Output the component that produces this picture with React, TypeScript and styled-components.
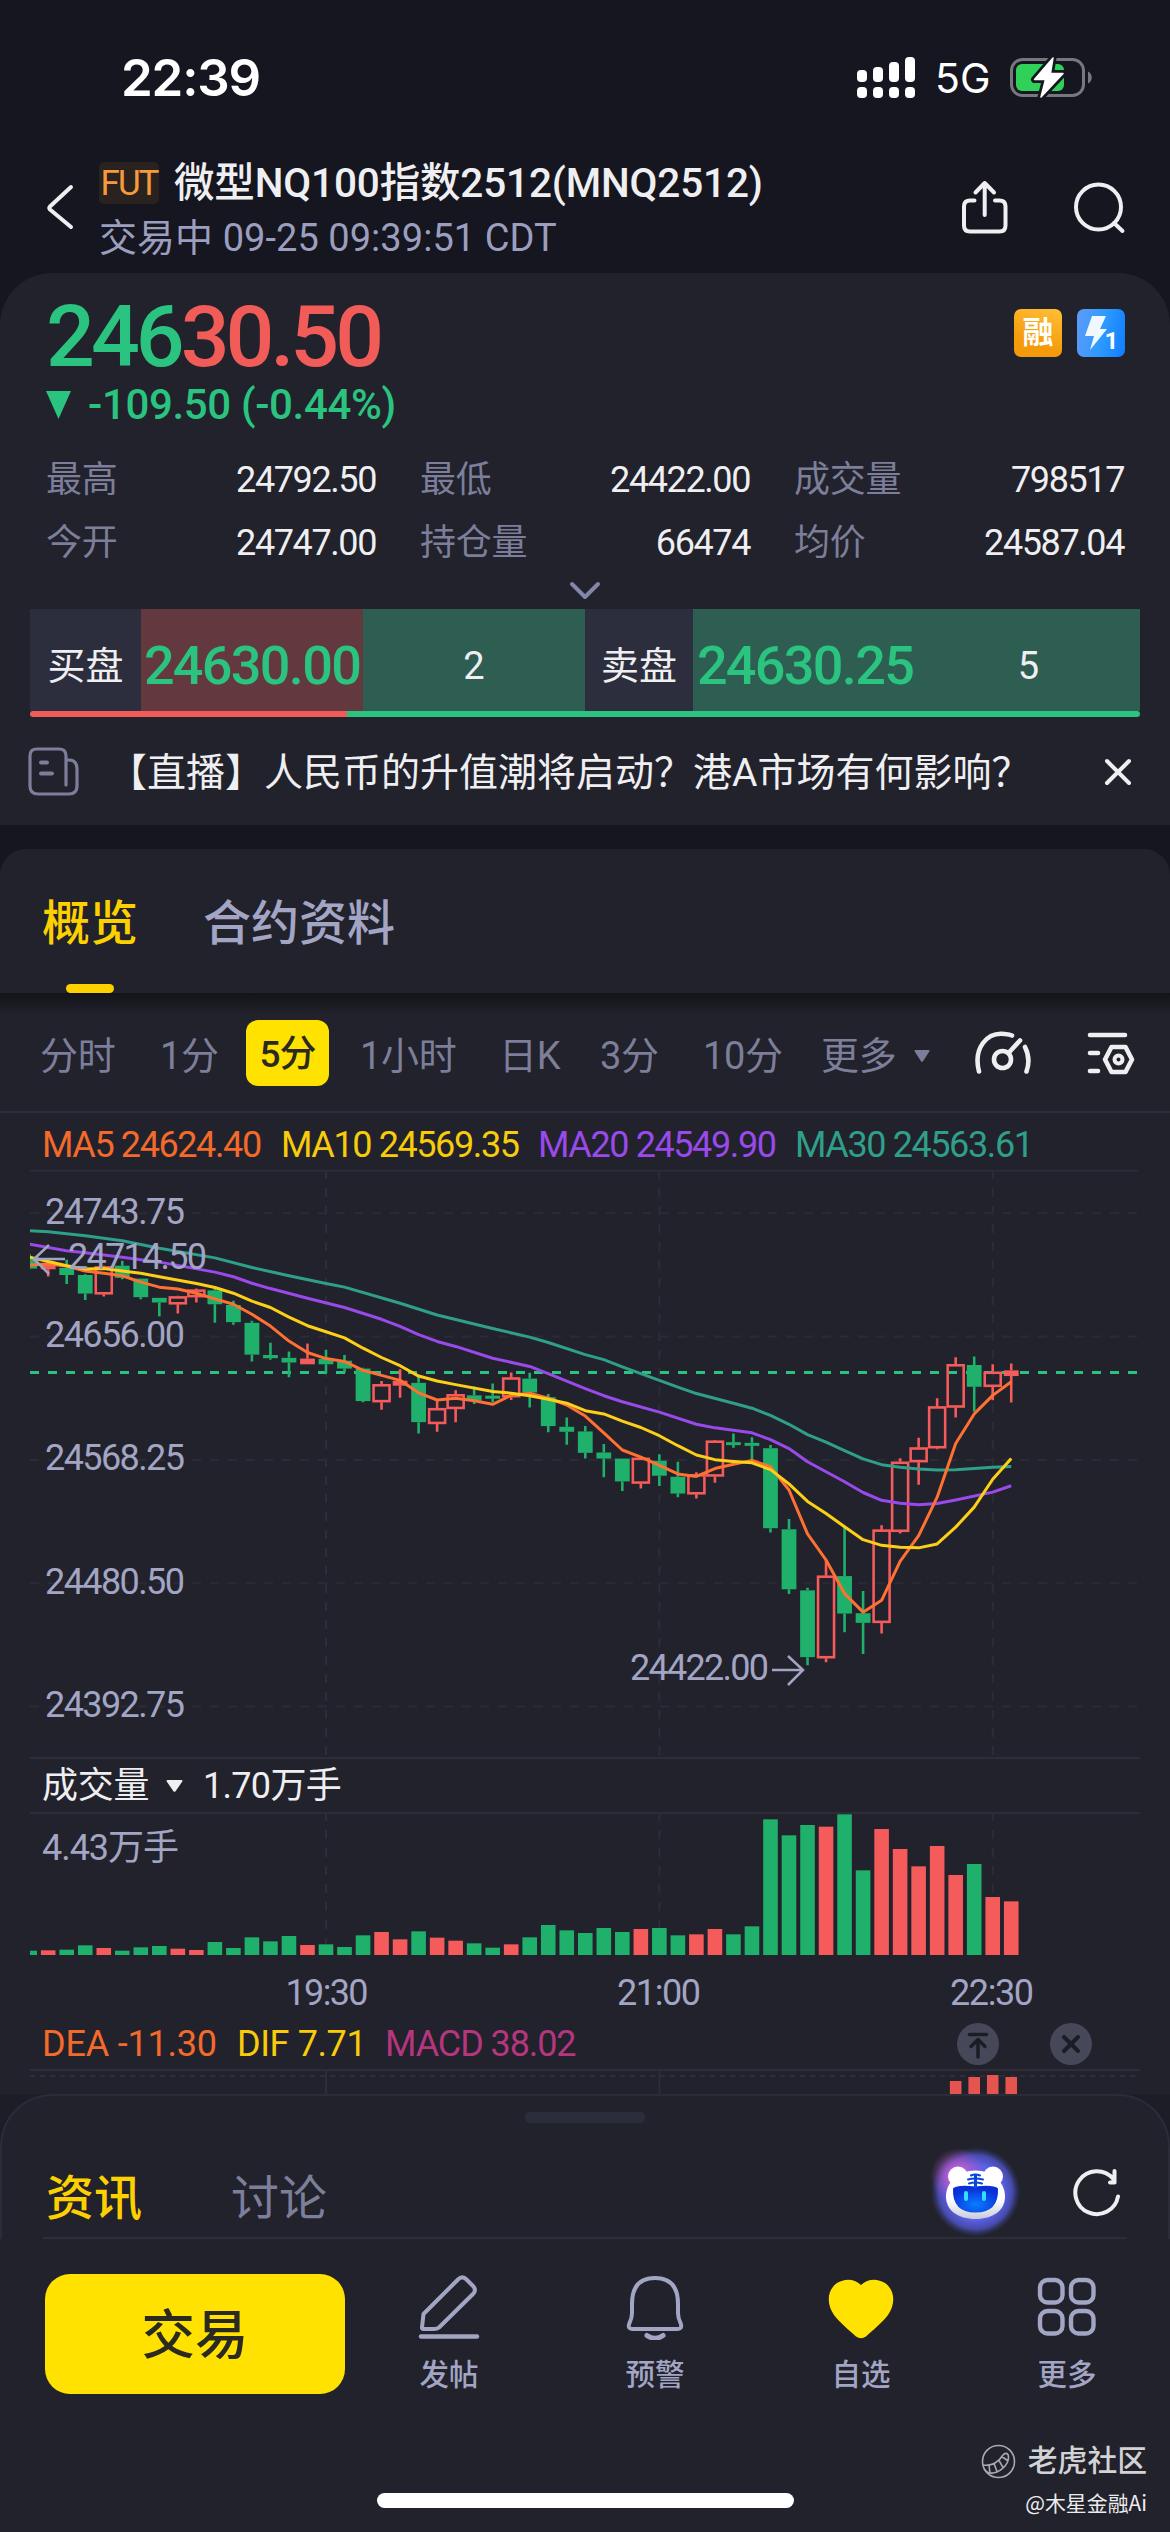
import React from "react";
import styled, { createGlobalStyle } from "styled-components";

const color = {
  page: "#15161f",
  card: "#21222b",
  line: "#2c2d39",
  white: "#efeff2",
  muted: "#7c7e9a",
  soft: "#a3a5c4",
  green: "#2bc380",
  red: "#f25c58",
  candleGreen: "#1fb06c",
  candleRed: "#f45b5a",
  yellow: "#ffe200",
  gold: "#fdd000",
};

const Global = createGlobalStyle`
  * { box-sizing: border-box; }
  body { margin: 0; background: ${color.page}; }
  svg { display: block; }
`;

const Screen = styled.div`
  width: 1170px;
  height: 2532px;
  overflow: hidden;
  display: flex;
  flex-direction: column;
  background: ${color.page};
  color: ${color.white};
  font-family: Roboto, "Noto Sans CJK SC", sans-serif;
  white-space: nowrap;
`;

/* ---------- text ---------- */

const Text = styled.span<{ $size: number; $color?: string; $weight?: number; $spacing?: number }>`
  font-size: ${(p) => p.$size}px;
  line-height: 1;
  color: ${(p) => p.$color ?? color.white};
  font-weight: ${(p) => p.$weight ?? 400};
  letter-spacing: ${(p) => p.$spacing ?? 0}px;
`;

/* ---------- status bar ---------- */

const StatusBar = styled.div`
  height: 150px;
  flex: none;
  display: flex;
  align-items: center;
  padding: 5px 77px 0 121px;
  font-family: Inter, sans-serif;
`;
const Clock = styled.div`
  flex: 1;
  font-size: 51px;
  font-weight: 600;
  line-height: 1;
  color: #fff;
  letter-spacing: -1.2px;
`;
const Network = styled.div`
  font-size: 41px;
  font-weight: 400;
  line-height: 1;
  color: #fff;
  width: 75px;
  padding: 2px 0 0 0;
`;
const SignalBox = styled.div`
  width: 78px;
`;

/* ---------- header ---------- */

const Header = styled.div`
  height: 123px;
  flex: none;
  display: flex;
  align-items: flex-start;
  padding: 10px 44px 0 46px;
`;
const BackBox = styled.div`
  width: 53px;
  padding-top: 24px;
`;
const Titles = styled.div`
  flex: 1;
  display: flex;
  flex-direction: column;
`;
const TitleRow = styled.div`
  display: flex;
  align-items: center;
  height: 46px;
  gap: 15px;
`;
const SubtitleRow = styled.div`
  display: flex;
  align-items: center;
  height: 64px;
`;
const FutTag = styled.div`
  width: 60px;
  height: 42px;
  border-radius: 5px;
  background: #2a221e;
  color: #f79a3c;
  font-size: 35px;
  line-height: 44px;
  text-align: center;
  letter-spacing: -2px;
`;
const HeaderIcons = styled.div`
  display: flex;
  gap: 65px;
  padding-top: 20px;
`;

/* ---------- quote card ---------- */

const QuoteCard = styled.div`
  height: 552px;
  flex: none;
  background: ${color.card};
  border-radius: 52px 52px 0 0;
  display: flex;
  flex-direction: column;
`;
const PriceRow = styled.div`
  display: flex;
  justify-content: space-between;
  align-items: flex-start;
  height: 102px;
  padding: 24px 45px 0 46px;
`;
const Price = styled.div`
  font-size: 86px;
  line-height: 80px;
  font-weight: 500;
  letter-spacing: -4px;
  color: ${color.red};
`;
const PriceHead = styled.span`
  color: ${color.green};
`;
const Badges = styled.div`
  display: flex;
  gap: 15px;
  padding-top: 12px;
`;
const Badge = styled.div<{ $bg: string }>`
  width: 48px;
  height: 48px;
  border-radius: 7px;
  background: ${(p) => p.$bg};
  display: flex;
  align-items: center;
  justify-content: center;
  font-size: 31px;
  font-weight: 700;
  line-height: 48px;
  color: #fff;
`;
const BoostDigit = styled.span`
  font-size: 24px;
  line-height: 24px;
  padding-top: 16px;
  margin-left: -3px;
  font-weight: 700;
`;
const ChangeRow = styled.div`
  display: flex;
  align-items: center;
  gap: 17px;
  height: 58px;
  padding: 2px 0 0 46px;
`;
const Stats = styled.div`
  display: grid;
  grid-template-columns: 330px 330px 330px;
  grid-auto-rows: 63px;
  column-gap: 44px;
  padding: 15px 0 0 46px;
`;
const Stat = styled.div`
  display: flex;
  align-items: center;
  justify-content: space-between;
`;
const ExpandRow = styled.div`
  height: 35px;
  display: flex;
  justify-content: center;
  padding-top: 7px;
`;
const Book = styled.div`
  height: 102px;
  flex: none;
  margin: 0 30px;
  display: grid;
  grid-template-columns: 111px 222px 222px 108px 224px 223px;
`;
const BookCell = styled.div<{ $bg: string }>`
  background: ${(p) => p.$bg};
  display: flex;
  align-items: center;
  justify-content: center;
  padding-top: 11px;
`;
const Ratio = styled.div`
  height: 6px;
  flex: none;
  margin: 0 30px;
  display: flex;
  border-radius: 3px;
  overflow: hidden;
`;
const RatioPart = styled.div<{ $grow: number; $bg: string }>`
  flex: ${(p) => p.$grow};
  background: ${(p) => p.$bg};
`;
const News = styled.div`
  flex: 1;
  display: flex;
  align-items: center;
  padding: 1px 38px 0 27px;
`;
const NewsText = styled.div`
  flex: 1;
  padding: 3px 0 0 28px;
  font-size: 39px;
  line-height: 40px;
  color: ${color.white};
`;

/* ---------- tabs ---------- */

const TabCard = styled.div`
  height: 144px;
  flex: none;
  margin-top: 24px;
  background: ${color.card};
  border-radius: 26px 26px 0 0;
  display: flex;
  gap: 65px;
  padding-left: 42px;
`;
const Tab = styled.div<{ $active?: boolean }>`
  display: flex;
  flex-direction: column;
  justify-content: space-between;
  align-items: center;
  padding-top: 51px;
  font-size: 48px;
  line-height: 48px;
  font-weight: 500;
  color: ${(p) => (p.$active ? color.gold : color.soft)};
`;
const TabLine = styled.div`
  width: 48px;
  height: 9px;
  border-radius: 5px;
  background: ${color.gold};
`;

/* ---------- chart ---------- */

const ChartCard = styled.div`
  height: 1101px;
  flex: none;
  background: linear-gradient(#131419 0, ${color.card} 22px);
  display: flex;
  flex-direction: column;
`;
const Periods = styled.div`
  height: 120px;
  flex: none;
  border-bottom: 2px solid ${color.line};
  display: grid;
  grid-template-columns: 120px 86px 114px 139px 101px 103px 118px 153px 112px 52px;
  align-items: center;
  padding: 2px 0 0 40px;
`;
const Period = styled.div`
  display: flex;
  align-items: center;
  gap: 18px;
  padding-top: 6px;
  font-size: 38px;
  line-height: 38px;
  font-weight: 400;
  letter-spacing: -0.3px;
  color: ${color.muted};
`;
const PeriodPill = styled.div`
  width: 83px;
  height: 66px;
  border-radius: 12px;
  background: ${color.yellow};
  color: #2b2a20;
  font-size: 37px;
  line-height: 69px;
  font-weight: 500;
  text-align: center;
  letter-spacing: -1px;
`;
const Averages = styled.div`
  height: 57px;
  flex: none;
  display: grid;
  grid-template-columns: 239px 257px 257px 260px;
  align-items: center;
  padding: 6px 0 0 42px;
`;
const Plot = styled.svg`
  flex: none;
`;

const VolumeHead = styled.div`
  height: 53px;
  flex: none;
  display: grid;
  grid-template-columns: 124px 37px auto;
  align-items: center;
  padding-left: 42px;
`;
const MacdHead = styled.div`
  height: 54px;
  flex: none;
  display: grid;
  grid-template-columns: 195px 148px 572px 93px 50px;
  align-items: center;
  padding: 3px 0 0 42px;
`;

/* ---------- bottom sheet ---------- */

const Sheet = styled.div`
  height: 145px;
  flex: none;
  background: ${color.card};
  border: 2px solid #2b2c38;
  border-bottom: 0;
  border-radius: 52px 52px 0 0;
  display: flex;
  flex-direction: column;
`;
const SheetWrap = styled.div`
  background: #1c1d26;
  flex: none;
`;
const Handle = styled.div`
  width: 120px;
  height: 12px;
  border-radius: 5px;
  background: #2c2d3b;
  margin: 16px auto 0;
`;
const SheetTabs = styled.div`
  flex: 1;
  margin: 0 41px;
  padding-left: 3px;
  border-bottom: 2px solid ${color.line};
  display: flex;
  align-items: flex-start;
`;
const SheetTab = styled.div<{ $active?: boolean }>`
  width: 185px;
  padding-top: 52px;
  font-size: 48px;
  line-height: 48px;
  font-weight: ${(p) => (p.$active ? 500 : 400)};
  color: ${(p) => (p.$active ? color.gold : color.muted)};
`;
const Spacer = styled.div`
  flex: 1;
`;
const BotBox = styled.div`
  width: 96px;
  height: 90px;
  margin: 24px 50px 0 0;
`;
const RefreshBox = styled.div`
  padding: 45px 6px 0 0;
`;
const ActionBar = styled.div`
  height: 187px;
  flex: none;
  background: ${color.card};
  display: flex;
  align-items: flex-start;
  padding: 35px 0 0 45px;
`;
const TradeButton = styled.div`
  width: 300px;
  height: 120px;
  margin-right: 1px;
  border-radius: 25px;
  background: ${color.yellow};
  color: #2b2a20;
  font-size: 53.5px;
  line-height: 123px;
  font-weight: 500;
  text-align: center;
`;
const Action = styled.div`
  width: 206px;
  display: flex;
  flex-direction: column;
  align-items: center;
  gap: 14px;
  font-size: 29.5px;
  line-height: 42px;
  font-weight: 500;
  color: ${color.soft};
`;
const Footer = styled.div`
  flex: 1;
  background: ${color.card};
  display: grid;
  grid-template-columns: 377px 417px 1fr;
`;
const HomeBar = styled.div`
  grid-column: 2;
  height: 15px;
  border-radius: 8px;
  background: #fff;
  align-self: end;
  margin-bottom: 24px;
`;
const Watermark = styled.div`
  display: flex;
  flex-direction: column;
  align-items: flex-end;
  padding: 17px 23px 0 0;
`;
const Brand = styled.div`
  display: flex;
  align-items: center;
  gap: 12px;
  height: 36px;
  font-size: 29.8px;
  line-height: 32px;
  font-weight: 500;
  color: #d3d3d6;
`;
const Author = styled.div`
  font-family: "Noto Sans CJK SC", sans-serif;
  font-size: 20.9px;
  line-height: 46px;
  color: #ececee;
`;

/* ---------- chart data ---------- */

const STEP = 18.52;
const X0 = 326;
const xAt = (k: number) => X0 + k * STEP;
/* Prices are stored in grid units; 2.8 units make one pixel. */
const yAt = (v: number) => 20 + v / 2.8;

type Candle = [string, number, number, number, number];
const FIRST = -16;
const candles: Candle[] = [
  ["g", 180, 190, 220, 222], ["r", 200, 205, 222, 242], ["g", 195, 218, 238, 263], ["g", 236, 238, 290, 308],
  ["r", 212, 214, 292, 298], ["g", 198, 212, 246, 250], ["g", 248, 248, 300, 306], ["g", 302, 302, 315, 354],
  ["r", 296, 298, 320, 346], ["r", 276, 279, 300, 315], ["g", 270, 281, 320, 372], ["g", 310, 322, 370, 377],
  ["g", 366, 372, 461, 480], ["g", 428, 462, 471, 475], ["g", 452, 470, 483, 524], ["r", 430, 472, 488, 488],
  ["g", 447, 473, 488, 513], ["g", 462, 478, 500, 512], ["g", 498, 500, 591, 594], ["r", 535, 544, 594, 615],
  ["r", 502, 534, 548, 582], ["g", 520, 540, 650, 682], ["r", 588, 611, 655, 677], ["r", 561, 572, 613, 650],
  ["g", 550, 575, 590, 599], ["g", 542, 576, 583, 594], ["r", 511, 525, 580, 588], ["g", 512, 528, 567, 609],
  ["g", 571, 580, 661, 678], ["g", 637, 663, 677, 713], ["g", 661, 676, 736, 752], ["g", 711, 735, 752, 804],
  ["g", 752, 752, 816, 843], ["r", 745, 750, 822, 836], ["g", 740, 758, 800, 829], ["g", 761, 803, 850, 860],
  ["r", 790, 796, 852, 864], ["r", 700, 702, 802, 820], ["g", 682, 706, 712, 722], ["g", 692, 708, 716, 760],
  ["g", 714, 723, 947, 959], ["g", 921, 950, 1118, 1131], ["g", 1114, 1121, 1308, 1331], ["r", 1036, 1080, 1311, 1322],
  ["g", 940, 1081, 1186, 1238], ["g", 1123, 1185, 1212, 1299], ["r", 939, 951, 1212, 1242], ["r", 751, 761, 957, 962],
  ["r", 694, 721, 762, 825], ["r", 583, 606, 723, 726], ["r", 468, 488, 609, 637], ["g", 466, 490, 551, 620],
  ["r", 488, 509, 551, 589], ["r", 486, 505, 521, 595],
];

type Knot = [number, number];
const averages: { stroke: string; knots: Knot[] }[] = [
  {
    stroke: "#2f9f8a",
    knots: [[-16, 114], [-15, 117], [-13, 128], [-11, 142], [-9, 163], [-6, 190], [-4, 217], [-2, 240], [0, 262], [1, 272], [4, 317], [6, 350], [9, 388], [11, 412], [12, 427], [14, 461], [15, 475], [16, 495], [18, 533], [19, 552], [20, 570], [22, 597], [23, 611], [24, 631], [25, 656], [26, 685], [27, 706], [28, 730], [29, 753], [30, 769], [31, 776], [32, 781], [33, 784], [34, 783], [35, 780], [36, 776], [37, 774]],
  },
  {
    stroke: "#9a49ea",
    knots: [[-16, 152], [-15, 161], [-14, 170], [-13, 176], [-11, 188], [-9, 202], [-8, 211], [-6, 230], [-5, 243], [-4, 261], [-3, 276], [-1, 303], [1, 329], [3, 362], [4, 382], [5, 405], [6, 424], [7, 438], [9, 471], [11, 494], [12, 514], [14, 556], [15, 576], [16, 593], [18, 622], [20, 656], [21, 666], [23, 680], [24, 699], [25, 724], [26, 761], [27, 789], [28, 817], [29, 847], [30, 869], [31, 877], [32, 881], [33, 878], [34, 868], [36, 846], [37, 828]],
  },
  {
    stroke: "#ff7033",
    knots: [[-16, 210], [-15, 207], [-14, 213], [-13, 227], [-12, 233], [-11, 240], [-10, 258], [-9, 272], [-8, 277], [-7, 289], [-6, 305], [-5, 320], [-4, 348], [-3, 381], [-2, 423], [-1, 455], [0, 472], [1, 480], [2, 505], [3, 519], [4, 533], [5, 568], [6, 588], [7, 583], [8, 590], [9, 600], [10, 575], [11, 569], [12, 583], [13, 602], [14, 633], [15, 680], [16, 728], [17, 748], [18, 771], [19, 795], [20, 802], [21, 780], [22, 768], [23, 757], [24, 775], [25, 840], [26, 963], [27, 1036], [28, 1130], [29, 1182], [30, 1149], [31, 1040], [32, 968], [33, 860], [34, 710], [35, 627], [36, 575], [37, 537]],
  },
  {
    stroke: "#fdd017",
    knots: [[-16, 188], [-15, 200], [-14, 212], [-13, 221], [-12, 220], [-11, 227], [-10, 233], [-9, 243], [-7, 262], [-6, 273], [-5, 289], [-4, 311], [-3, 329], [-2, 356], [-1, 380], [0, 397], [1, 414], [2, 443], [3, 469], [4, 492], [5, 521], [6, 535], [7, 545], [9, 564], [10, 569], [11, 576], [12, 586], [13, 597], [14, 618], [15, 627], [16, 647], [17, 665], [18, 688], [19, 716], [20, 742], [21, 755], [22, 760], [23, 764], [24, 783], [25, 823], [26, 872], [27, 906], [28, 943], [29, 979], [30, 995], [31, 1000], [32, 1002], [33, 991], [34, 944], [35, 888], [36, 810], [37, 752]],
  },
];

/* Height of each volume bar, in thirds of a pixel. */
const volumes: [string, number][] = [
  ["g", 13], ["r", 14], ["g", 16], ["g", 29], ["r", 21], ["g", 13], ["g", 23], ["g", 27], ["r", 19], ["r", 15],
  ["g", 39], ["g", 21], ["g", 53], ["g", 41], ["g", 57], ["r", 30], ["g", 32], ["g", 24], ["g", 59], ["r", 69],
  ["r", 47], ["g", 71], ["r", 52], ["r", 43], ["g", 35], ["g", 22], ["r", 32], ["g", 53], ["g", 90], ["g", 74],
  ["g", 66], ["g", 81], ["g", 69], ["r", 78], ["g", 81], ["g", 59], ["r", 62], ["r", 78], ["g", 62], ["g", 86],
  ["g", 407], ["g", 359], ["g", 390], ["r", 385], ["g", 422], ["g", 254], ["r", 378], ["r", 318], ["r", 266],
  ["r", 327], ["r", 240], ["g", 273], ["r", 174], ["r", 161],
];

const macdBars = [13, 17, 19, 17];

const gridX = [326, 659.4, 992.7];
const priceLabels = ["24743.75", "24656.00", "24568.25", "24480.50", "24392.75"];
const tone = (c: string) => (c === "g" ? color.candleGreen : color.candleRed);

const Label = ({ x, y, width, anchor, children }: { x: number; y: number; width: number; anchor?: "middle"; children: string }) => (
  <text x={x} y={y} fontFamily="Roboto, 'Noto Sans CJK SC', sans-serif" fontSize={36} fill={color.soft} textLength={width} textAnchor={anchor}>
    {children}
  </text>
);

const PriceChart = () => (
  <Plot width={1170} height={589} viewBox="0 0 1170 589">
    <path d="M30 0.500H1138M30 588H1140" stroke={color.line} strokeWidth={2} />
    {gridX.map((x) => (
      <path key={x} d={`M${x} 0V588`} stroke="#2c2d38" strokeWidth={2} strokeDasharray="9 9" />
    ))}
    {priceLabels.map((_, i) => (
      <path key={i} d={`M30 ${43.2 + i * 123.35}H1140`} stroke="#2a2b36" strokeWidth={2} strokeDasharray="9 9" />
    ))}
    <path d="M30 202.500H1138" stroke={color.green} strokeWidth={3} strokeDasharray="9 9" />
    <clipPath id="plotArea">
      <rect x={30} y={0} width={1110} height={588} />
    </clipPath>
    <g clipPath="url(#plotArea)">
      {candles.map(([c, hi, top, bottom, lo], i) => {
        const x = xAt(FIRST + i);
        const solid = c === "g" || bottom - top < 18;
        return (
          <g key={i} stroke={tone(c)} strokeWidth={2.6}>
            <path d={`M${x} ${yAt(hi)}V${yAt(top)}M${x} ${yAt(bottom)}V${yAt(lo)}`} />
            {solid ? (
              <rect x={x - 7.4} y={yAt(top)} width={14.8} height={Math.max(3, (bottom - top) / 2.8)} fill={tone(c)} stroke="none" />
            ) : (
              <rect x={x - 8} y={yAt(top) + 1} width={16} height={(bottom - top) / 2.8 - 2} fill="none" />
            )}
          </g>
        );
      })}
      {averages.map((line) => (
        <polyline
          key={line.stroke}
          points={line.knots.map(([k, v]) => `${xAt(k)},${yAt(v)}`).join(" ")}
          fill="none"
          stroke={line.stroke}
          strokeWidth={3}
          strokeLinejoin="round"
        />
      ))}
    </g>
    {priceLabels.map((t, i) => (
      <Label key={t} x={45} y={53.5 + i * 123.35} width={140}>
        {t}
      </Label>
    ))}
    <Label x={68} y={99} width={139}>24714.50</Label>
    <path d="M65 89H34M49 75L34 89L49 104" fill="none" stroke={color.soft} strokeWidth={2.5} />
    <Label x={630} y={510} width={139}>24422.00</Label>
    <path d="M772 500H803M788 486L803 500L788 515" fill="none" stroke={color.soft} strokeWidth={2.5} />
  </Plot>
);

const VolumeChart = () => (
  <Plot width={1170} height={203} viewBox="0 0 1170 203">
    <path d="M30 1H1140" stroke={color.line} strokeWidth={2} />
    {gridX.map((x) => (
      <path key={x} d={`M${x} 0V143`} stroke="#2c2d38" strokeWidth={2} strokeDasharray="9 9" />
    ))}
    <clipPath id="volumeArea">
      <rect x={30} y={0} width={1110} height={203} />
    </clipPath>
    <g clipPath="url(#volumeArea)">
      {volumes.map(([c, h], i) => (
        <rect key={i} x={xAt(FIRST + i) - 7.3} y={143 - h / 3} width={14.6} height={h / 3} fill={tone(c)} />
      ))}
    </g>
    <Label x={42} y={48} width={137}>4.43万手</Label>
    <Label x={327} y={193} width={83} anchor="middle">19:30</Label>
    <Label x={659} y={193} width={84} anchor="middle">21:00</Label>
    <Label x={992} y={193} width={84} anchor="middle">22:30</Label>
  </Plot>
);

const MacdChart = () => (
  <Plot width={1170} height={25} viewBox="0 0 1170 25">
    <path d="M30 1H1140" stroke={color.line} strokeWidth={2} />
    <path d="M30 7H1140" stroke={color.line} strokeWidth={2} strokeDasharray="5 5" />
    {gridX.slice(0, 2).map((x) => (
      <path key={x} d={`M${x} 0V25`} stroke="#2c2d38" strokeWidth={2} />
    ))}
    {macdBars.map((h, i) => (
      <rect key={i} x={xAt(34 + i) - 5.8} y={25 - h} width={11.6} height={h} fill="#e5544f" />
    ))}
  </Plot>
);

/* ---------- icons ---------- */

const Signal = () => (
  <svg width={59} height={42} viewBox="0 0 59 42" fill="#fff">
    {[13, 10, 5, 0].map((y, i) => (
      <g key={i}>
        <rect x={i * 16} y={y} width={10} height={25 - y} rx={4} />
        <rect x={i * 16} y={30} width={10} height={11} rx={4} />
      </g>
    ))}
  </svg>
);

const Battery = () => (
  <svg width={83} height={42} viewBox="0 0 83 42">
    <rect x={1.5} y={2.5} width={72} height={36} rx={11} fill="none" stroke="#77777e" strokeWidth={3} />
    <path d="M78 14.500c5 2 5 10 0 12z" fill="#77777e" />
    <rect x={6} y={7} width={48} height={27} rx={6} fill="#30d158" />
    <path d="M43 1L24.500 22.500H35.500L31 40L53 16.500H40.500Z" fill="#fff" stroke={color.page} strokeWidth={7} strokeLinejoin="round" />
    <path d="M43 1L24.500 22.500H35.500L31 40L53 16.500H40.500Z" fill="#fff" stroke="#fff" strokeWidth={1.5} strokeLinejoin="round" />
  </svg>
);

const Back = () => (
  <svg width={30} height={48} viewBox="0 0 30 48" fill="none" stroke={color.white} strokeWidth={4} strokeLinecap="round" strokeLinejoin="round">
    <path d="M25 3L4 22.500Q2.500 24 4 25.500L25 43" />
  </svg>
);

const Share = () => (
  <svg width={48} height={56} viewBox="0 0 48 56" fill="none" stroke={color.white} strokeWidth={4} strokeLinecap="round" strokeLinejoin="round">
    <path d="M13.500 20.500H9Q3 20.500 3 26.500V45.500Q3 51.500 9 51.500H38.500Q44.500 51.500 44.500 45.500V26.500Q44.500 20.500 38.500 20.500H34" />
    <path d="M23.700 35V3M14.500 12.500L23.700 3L33 12.500" />
  </svg>
);

const Search = () => (
  <svg width={52} height={56} viewBox="0 0 52 56" fill="none" stroke={color.white} strokeWidth={4} strokeLinecap="round">
    <circle cx={24.5} cy={27} r={22.5} />
    <path d="M40 43L48.500 51" />
  </svg>
);

const Down = ({ width, height, fill }: { width: number; height: number; fill: string }) => (
  <svg width={width} height={height} viewBox="0 0 16 12" preserveAspectRatio="none" fill={fill}>
    <path d="M1.500 0H14.500Q16 0 15.300 1.500L9 11.200Q8 12.500 7 11.200L.7 1.500Q0 0 1.500 0Z" />
  </svg>
);

const Falling = () => (
  <svg width={25} height={29} viewBox="0 0 25 29" fill={color.green}>
    <path d="M0 0H25L12.500 28Z" />
  </svg>
);

const Bolt = () => (
  <svg width={24} height={36} viewBox="0 0 24 36">
    <path d="M8 1H22L16 14H23L6 35L10 21H1Z" fill="#f0f8ff" />
  </svg>
);

const NewsIcon = () => (
  <svg width={53} height={50} viewBox="0 0 53 50" fill="none" stroke={color.muted} strokeWidth={3.2} strokeLinecap="round">
    <path d="M39 38V9Q39 2 32 2H10Q3 2 3 9V39Q3 47 11 47H42Q50 47 50 39V22Q50 13 42 13H39" />
    <path d="M14 15.500H20M14 26.500H25" strokeWidth={4} />
  </svg>
);

const Close = () => (
  <svg width={28} height={28} viewBox="0 0 28 28" stroke={color.white} strokeWidth={4} strokeLinecap="round">
    <path d="M3 3L25 25M25 3L3 25" />
  </svg>
);

const Gauge = () => (
  <svg width={58} height={44} viewBox="0 0 58 44" fill="none" stroke={color.white} strokeWidth={4.6} strokeLinecap="round">
    <path d="M5 40.500C-1 17 13 .5 31 3Q36 3.500 38 4.500" />
    <path d="M51 16Q57 28 52.500 40.500" />
    <circle cx={28.5} cy={28.5} r={8.5} />
    <path d="M34.500 22L46 9.500" />
  </svg>
);

const ChartSettings = () => (
  <svg width={50} height={44} viewBox="0 0 50 44" fill="none" stroke={color.white} strokeWidth={4.6} strokeLinecap="round" strokeLinejoin="round">
    <path d="M4 4H39M4 22H12M4 40H12" />
    <path d="M25.500 16H39.500L46 28.500L39.500 41H25.500L19 28.500Z" />
    <circle cx={32.5} cy={28.5} r={4} strokeWidth={4} />
  </svg>
);

const RoundTop = () => (
  <svg width={42} height={42} viewBox="0 0 42 42" fill="none" stroke="#1b1c25" strokeWidth={3.5} strokeLinecap="round" strokeLinejoin="round">
    <circle cx={21} cy={21} r={21} fill="#46485a" stroke="none" />
    <path d="M12.500 11.500H29.500M21 34V17M14 23.500L21 16.500L28 23.500" />
  </svg>
);

const RoundClose = () => (
  <svg width={42} height={42} viewBox="0 0 42 42" stroke="#1b1c25" strokeWidth={4} strokeLinecap="round">
    <circle cx={21} cy={21} r={21} fill="#46485a" stroke="none" />
    <path d="M14 14L28 28M28 14L14 28" />
  </svg>
);

const Bot = () => (
  <svg width={96} height={90} viewBox="0 0 96 90" overflow="visible">
    <defs>
      <radialGradient id="haloBlue">
        <stop offset="0.6" stopColor="#5c63e8" />
        <stop offset="0.82" stopColor="#4f55cc" stopOpacity="0.8" />
        <stop offset="1" stopColor="#3a3c80" stopOpacity="0" />
      </radialGradient>
      <radialGradient id="haloPink">
        <stop offset="0.3" stopColor="#c060d0" stopOpacity="0.95" />
        <stop offset="1" stopColor="#a050c8" stopOpacity="0" />
      </radialGradient>
      <radialGradient id="visor" cx="0.5" cy="0.7" r="0.6">
        <stop offset="0" stopColor="#0a7dff" />
        <stop offset="1" stopColor="#0a2fd8" />
      </radialGradient>
      <linearGradient id="fur" x1="0" y1="0" x2="0" y2="1">
        <stop offset="0.6" stopColor="#ffffff" />
        <stop offset="1" stopColor="#c9cbdc" />
      </linearGradient>
    </defs>
    <circle cx={48.5} cy={45} r={45} fill="url(#haloBlue)" />
    <circle cx={31} cy={29} r={28} fill="url(#haloPink)" />
    <g transform="translate(0 3.500)">
      <circle cx={31} cy={26} r={10} fill="#fff" />
      <circle cx={66} cy={26} r={10} fill="#fff" />
      <path d="M48.500 20C66 20 78 32 78 46C78 60 66 68.500 48.500 68.500S19 60 19 46C19 32 31 20 48.500 20Z" fill="url(#fur)" />
      <path d="M26 38Q30 34 48 36Q67 34 71 38Q72 62 48.500 62Q25 62 26 38Z" fill="url(#visor)" />
      <path d="M44 25Q48 23 53 25M41 29Q48 27 56 29M42 33Q48 31 55 33" stroke="#0a46d8" strokeWidth={2} fill="none" strokeLinecap="round" />
      <path d="M48.500 24V38" stroke="#0a46d8" strokeWidth={3} />
      <path d="M39 42.500V48.500M57 42.500V48.500" stroke="#2fe0ff" strokeWidth={4} strokeLinecap="round" />
    </g>
  </svg>
);

const Refresh = () => (
  <svg width={48} height={50} viewBox="0 0 48 50" fill="none" stroke={color.white} strokeWidth={4} strokeLinecap="round" strokeLinejoin="round">
    <path d="M45 28.500A21.500 21.500 0 1 1 40 10.500L41.500 14.500M41.500 3V14.500H37" />
  </svg>
);

const Pen = () => (
  <svg width={64} height={66} viewBox="0 0 64 66" fill="none" stroke={color.soft} strokeWidth={4} strokeLinecap="round" strokeLinejoin="round">
    <path d="M5 53.500L6.500 40L41 5.500Q45 1.500 49 5L56 12Q60 16 56 20L22 53.500Q20 55 17 55H6.500Q4.800 55 5 53.500Z" />
    <path d="M4 62.500H60" strokeWidth={4.5} />
  </svg>
);

const Bell = () => (
  <svg width={64} height={66} viewBox="0 0 64 66" fill="none" stroke={color.soft} strokeWidth={4} strokeLinecap="round" strokeLinejoin="round">
    <path d="M9 30Q9 4 32 4Q55 4 55 30V39Q55 44 57.500 49Q60 55 54 55H10Q4 55 6.500 49Q9 44 9 39Z" />
    <path d="M24 61.500Q32 67 40 61.500" strokeWidth={5} />
  </svg>
);

const Heart = () => (
  <svg width={66} height={66} viewBox="0 0 66 66" fill={color.yellow}>
    <path d="M33 11C26 4 16 4.500 9 9C-2 17-1 31 6 41C12 49 21 56 28 62.500Q33 66 38 62.500C45 56 54 49 60 41C67 31 68 17 57 9C50 4.500 40 4 33 11Z" />
  </svg>
);

const Grid = () => (
  <svg width={62} height={66} viewBox="0 0 62 66" fill="none" stroke={color.soft} strokeWidth={4.4}>
    {[[4, 6], [35, 6], [4, 37], [35, 37]].map(([x, y]) => (
      <rect key={`${x}-${y}`} x={x} y={y} width={22.5} height={22.5} rx={7.5} />
    ))}
  </svg>
);

const BrandMark = () => (
  <svg width={35} height={35} viewBox="0 0 35 35" fill="none" stroke="#a9a9ae" strokeWidth={1.6}>
    <circle cx={17.5} cy={17.5} r={16} />
    <path d="M2 21Q9 22 14 19T22 11Q25 8 27 10.500Q29 16 24 22T12 29Q7 30 3 25M8 21L9 29M13 19.500L16 27.500M18 16.500L22 23.500M21 12.500L27 17" />
  </svg>
);

/* ---------- content ---------- */

const stats = [
  ["最高", "24792.50"],
  ["最低", "24422.00"],
  ["成交量", "798517"],
  ["今开", "24747.00"],
  ["持仓量", "66474"],
  ["均价", "24587.04"],
];

const bookGreen = "#2e5d52";

export default function App() {
  return (
    <>
      <Global />
      <Screen>
        <StatusBar>
          <Clock>22:39</Clock>
          <SignalBox><Signal /></SignalBox>
          <Network>5G</Network>
          <Battery />
        </StatusBar>

        <Header>
          <BackBox><Back /></BackBox>
          <Titles>
            <TitleRow>
              <FutTag>FUT</FutTag>
              <Text $size={40.5} $weight={500} $spacing={-0.15}>微型NQ100指数2512(MNQ2512)</Text>
            </TitleRow>
            <SubtitleRow>
              <Text $size={38} $color="#9c9ebf" $spacing={0.05}>交易中 09-25 09:39:51 CDT</Text>
            </SubtitleRow>
          </Titles>
          <HeaderIcons><Share /><Search /></HeaderIcons>
        </Header>

        <QuoteCard>
          <PriceRow>
            <Price><PriceHead>246</PriceHead>30.50</Price>
            <Badges>
              <Badge $bg="linear-gradient(200deg, #ffc03a, #f59a0a 70%)">融</Badge>
              <Badge $bg="linear-gradient(100deg, #5f9bf8, #2f9bff 50%, #0f7dff)">
                <Bolt />
                <BoostDigit>1</BoostDigit>
              </Badge>
            </Badges>
          </PriceRow>
          <ChangeRow>
            <Falling />
            <Text $size={42} $weight={500} $color={color.green} $spacing={-0.35}>-109.50 (-0.44%)</Text>
          </ChangeRow>
          <Stats>
            {stats.map(([label, value]) => (
              <Stat key={label}>
                <Text $size={36} $color={color.muted} $spacing={-0.3}>{label}</Text>
                <Text $size={36} $spacing={-1.4}>{value}</Text>
              </Stat>
            ))}
          </Stats>
          <ExpandRow>
            <svg width={32} height={20} viewBox="0 0 32 20" fill="none" stroke="#8486a8" strokeWidth={4} strokeLinecap="round" strokeLinejoin="round">
              <path d="M3 3L16 16L29 3" />
            </svg>
          </ExpandRow>
          <Book>
            <BookCell $bg="#2d2e3d"><Text $size={38}>买盘</Text></BookCell>
            <BookCell $bg="#63393f"><Text $size={54} $weight={500} $color={color.green} $spacing={-1.7}>24630.00</Text></BookCell>
            <BookCell $bg={bookGreen}><Text $size={38}>2</Text></BookCell>
            <BookCell $bg="#2d2e3d"><Text $size={38}>卖盘</Text></BookCell>
            <BookCell $bg={bookGreen}><Text $size={54} $weight={500} $color={color.green} $spacing={-1.7}>24630.25</Text></BookCell>
            <BookCell $bg={bookGreen}><Text $size={38}>5</Text></BookCell>
          </Book>
          <Ratio>
            <RatioPart $grow={317} $bg={color.red} />
            <RatioPart $grow={793} $bg={color.green} />
          </Ratio>
          <News>
            <NewsIcon />
            <NewsText>【直播】人民币的升值潮将启动？港A市场有何影响？</NewsText>
            <Close />
          </News>
        </QuoteCard>

        <TabCard>
          <Tab $active>概览<TabLine /></Tab>
          <Tab>合约资料</Tab>
        </TabCard>

        <ChartCard>
          <Periods>
            <Period>分时</Period>
            <Period>1分</Period>
            <PeriodPill>5分</PeriodPill>
            <Period>1小时</Period>
            <Period>日K</Period>
            <Period>3分</Period>
            <Period>10分</Period>
            <Period>更多<Down width={16} height={12} fill={color.muted} /></Period>
            <Gauge />
            <ChartSettings />
          </Periods>
          <Averages>
            <Text $size={36} $color="#f46a2c" $spacing={-1.4}>MA5 24624.40</Text>
            <Text $size={36} $color="#f8cc0a" $spacing={-1.4}>MA10 24569.35</Text>
            <Text $size={36} $color="#9a49ea" $spacing={-1.4}>MA20 24549.90</Text>
            <Text $size={36} $color="#2f9f8a" $spacing={-1.4}>MA30 24563.61</Text>
          </Averages>
          <PriceChart />
          <VolumeHead>
            <Text $size={36} $spacing={-0.3}>成交量</Text>
            <Down width={17} height={12} fill={color.white} />
            <Text $size={36} $spacing={-0.7}>1.70万手</Text>
          </VolumeHead>
          <VolumeChart />
          <MacdHead>
            <Text $size={36} $color="#f46a2c" $spacing={-0.2}>DEA -11.30</Text>
            <Text $size={36} $color="#f8cc0a" $spacing={-0.4}>DIF 7.71</Text>
            <Text $size={36} $color="#b5357f" $spacing={-1.1}>MACD 38.02</Text>
            <RoundTop />
            <RoundClose />
          </MacdHead>
          <MacdChart />
        </ChartCard>

        <SheetWrap>
          <Sheet>
            <Handle />
            <SheetTabs>
              <SheetTab $active>资讯</SheetTab>
              <SheetTab>讨论</SheetTab>
              <Spacer />
              <BotBox><Bot /></BotBox>
              <RefreshBox><Refresh /></RefreshBox>
            </SheetTabs>
          </Sheet>
        </SheetWrap>

        <ActionBar>
          <TradeButton>交易</TradeButton>
          <Action><Pen />发帖</Action>
          <Action><Bell />预警</Action>
          <Action><Heart />自选</Action>
          <Action><Grid />更多</Action>
        </ActionBar>

        <Footer>
          <HomeBar />
          <Watermark>
            <Brand><BrandMark />老虎社区</Brand>
            <Author>@木星金融Ai</Author>
          </Watermark>
        </Footer>
      </Screen>
    </>
  );
}
